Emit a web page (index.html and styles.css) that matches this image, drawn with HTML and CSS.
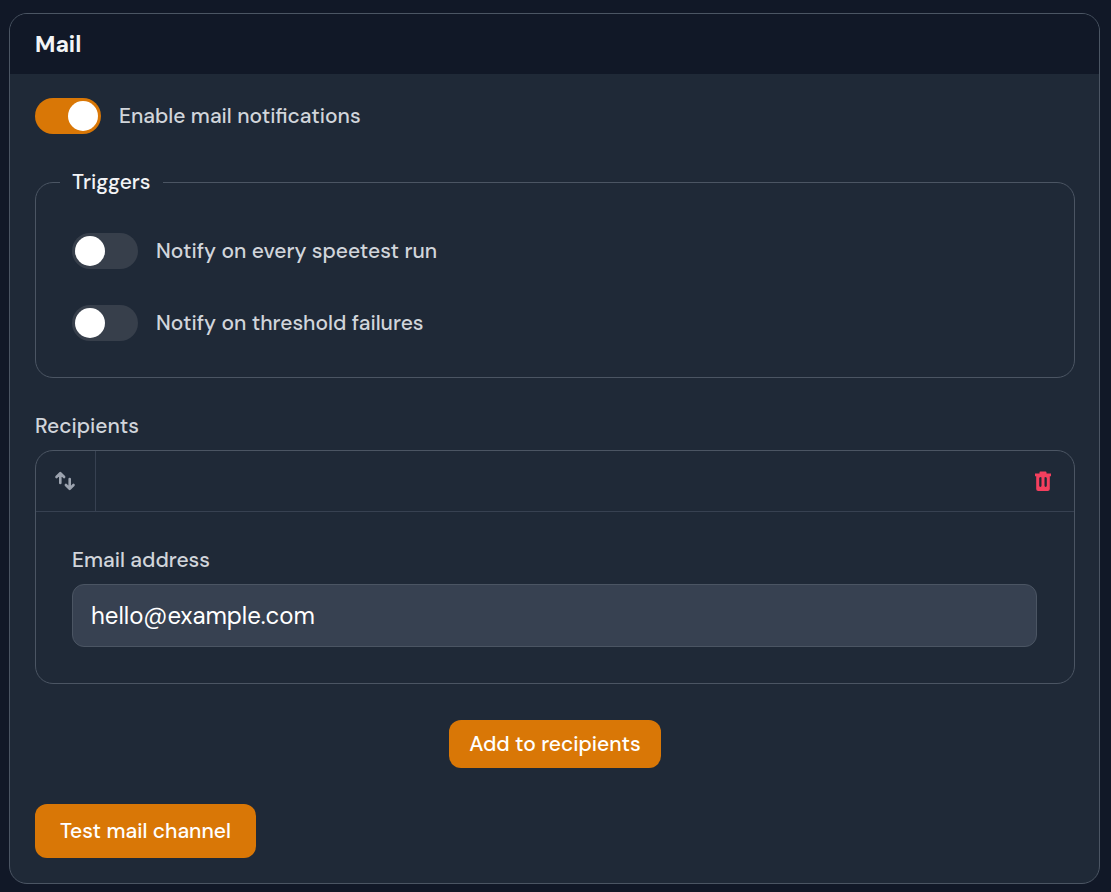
FILE: index.html
```html
<!DOCTYPE html>
<html lang="en">
<head>
<meta charset="utf-8">
<meta name="viewport" content="width=device-width, initial-scale=1">
<title>Mail notifications</title>
<link rel="stylesheet" href="styles.css">
</head>
<body>
<form class="card">
  <header class="card-header"><h1 class="card-title">Mail</h1></header>
  <div class="card-body">
    <label class="switch-row">
      <input class="switch" type="checkbox" role="switch" checked>
      <span>Enable mail notifications</span>
    </label>

    <fieldset class="triggers">
      <legend class="triggers-title">Triggers</legend>
      <label class="switch-row">
        <input class="switch" type="checkbox" role="switch">
        <span>Notify on every speetest run</span>
      </label>
      <label class="switch-row">
        <input class="switch" type="checkbox" role="switch">
        <span>Notify on threshold failures</span>
      </label>
    </fieldset>

    <section class="recipients" aria-labelledby="recipients-title">
      <h2 class="field-label" id="recipients-title">Recipients</h2>
      <div class="item">
        <div class="item-header">
          <button class="icon-button move" type="button" aria-label="Move">
            <svg class="icon" viewBox="0 0 24 24" fill="none" stroke="currentColor" stroke-width="2.6" stroke-linecap="round" stroke-linejoin="round" aria-hidden="true"><path d="M7.300 14V5M3.500 8l3.800-3.900L11.100 8M16.700 10v9M12.900 16l3.800 3.900 3.800-3.900"/></svg>
          </button>
          <button class="icon-button delete" type="button" aria-label="Delete">
            <svg class="icon" viewBox="0 0 24 24" fill="currentColor" fill-rule="evenodd" aria-hidden="true"><path d="M9.500 2.400h5a1 1 0 0 1 1 1v1.200h4.500v2.600h-1.200v12.800a2 2 0 0 1-2 2H7.200a2 2 0 0 1-2-2V7.200H4V4.600h4.500V3.400a1 1 0 0 1 1-1zM9.200 8.200a1 1 0 0 0-1 1v7.600a1 1 0 0 0 2.300 0V9.200a1 1 0 0 0-1.300-1zM14.800 8.200a1 1 0 0 0-1.300 1v7.600a1 1 0 0 0 2.300 0V9.200a1 1 0 0 0-1-1z"/></svg>
          </button>
        </div>
        <div class="item-body">
          <label class="field-label" for="email">Email address</label>
          <input class="text-input" id="email" type="email" value="hello@example.com">
        </div>
      </div>
      <button class="button add" type="button">Add to recipients</button>
    </section>

    <button class="button test" type="button">Test mail channel</button>
  </div>
</form>
</body>
</html>
```
FILE: styles.css
```css
* { box-sizing: border-box; }

body {
  margin: 0;
  padding: 13px 11px 8px 9px;
  background: #111827;
  color: #d1d5db;
  font: 500 21px/30px "DM Sans", Inter, sans-serif;
}

.card {
  border: 1px solid #4b5563;
  border-radius: 18px;
  background: #1f2937;
  overflow: hidden;
}

.card-header {
  padding: 15px 25px;
  background: #111827;
}

.card-title {
  margin: 0;
  color: #f3f4f6;
  font-size: 23px;
  font-weight: 700;
  line-height: 30px;
}

.card-body {
  display: flex;
  flex-direction: column;
  gap: 33px;
  padding: 24px 24px 25px 25px;
}

.switch-row {
  display: flex;
  align-items: center;
  gap: 18px;
}

.switch {
  appearance: none;
  flex: none;
  width: 66px;
  height: 36px;
  margin: 0;
  padding: 3px;
  border-radius: 18px;
  background: #373f4b;
  cursor: pointer;
}

.switch::before {
  content: "";
  display: block;
  width: 30px;
  height: 30px;
  border-radius: 50%;
  background: #fff;
}

.switch:checked { background: #d97706; }
.switch:checked::before { margin-left: auto; }

.triggers {
  display: grid;
  gap: 36px;
  min-width: 0;
  margin: 0;
  padding: 36px 36px 36px 24px;
  border: 1px solid #4b5563;
  border-radius: 18px;
}

.triggers .switch-row { padding-left: 12px; }

.triggers-title {
  padding: 0 12px;
  color: #f3f4f6;
}

.recipients {
  display: flex;
  flex-direction: column;
}

.field-label {
  display: block;
  margin: 0 0 9px;
  font-size: 21px;
  font-weight: 500;
  line-height: 30px;
}

.item {
  border: 1px solid #4b5563;
  border-radius: 18px;
}

.item-header {
  display: flex;
  justify-content: space-between;
  height: 61px;
  border-bottom: 1px solid #374151;
}

.icon-button {
  display: grid;
  place-items: center;
  width: 60px;
  padding: 0;
  border: 0;
  background: none;
  cursor: pointer;
}

.move {
  padding-right: 1px;
  border-right: 1px solid #374151;
  color: #9ca3af;
}

.delete {
  width: 62px;
  color: #f43f5e;
}

.icon {
  width: 24px;
  height: 24px;
}

.item-body { padding: 33px 37px 36px 36px; }

.text-input {
  display: block;
  width: 100%;
  height: 63px;
  padding: 0 18px;
  border: 1px solid #4b5563;
  border-radius: 12px;
  background: #374151;
  color: #fff;
  font: inherit;
  font-size: 24px;
  font-weight: 400;
}

.button {
  padding: 9px 20px;
  border: 0;
  border-radius: 12px;
  background: #d97706;
  color: #fff;
  font: inherit;
  cursor: pointer;
}

.add {
  align-self: center;
  margin-top: 36px;
}

.test {
  align-self: flex-start;
  margin-top: 3px;
  padding: 12px 25px;
}
```
